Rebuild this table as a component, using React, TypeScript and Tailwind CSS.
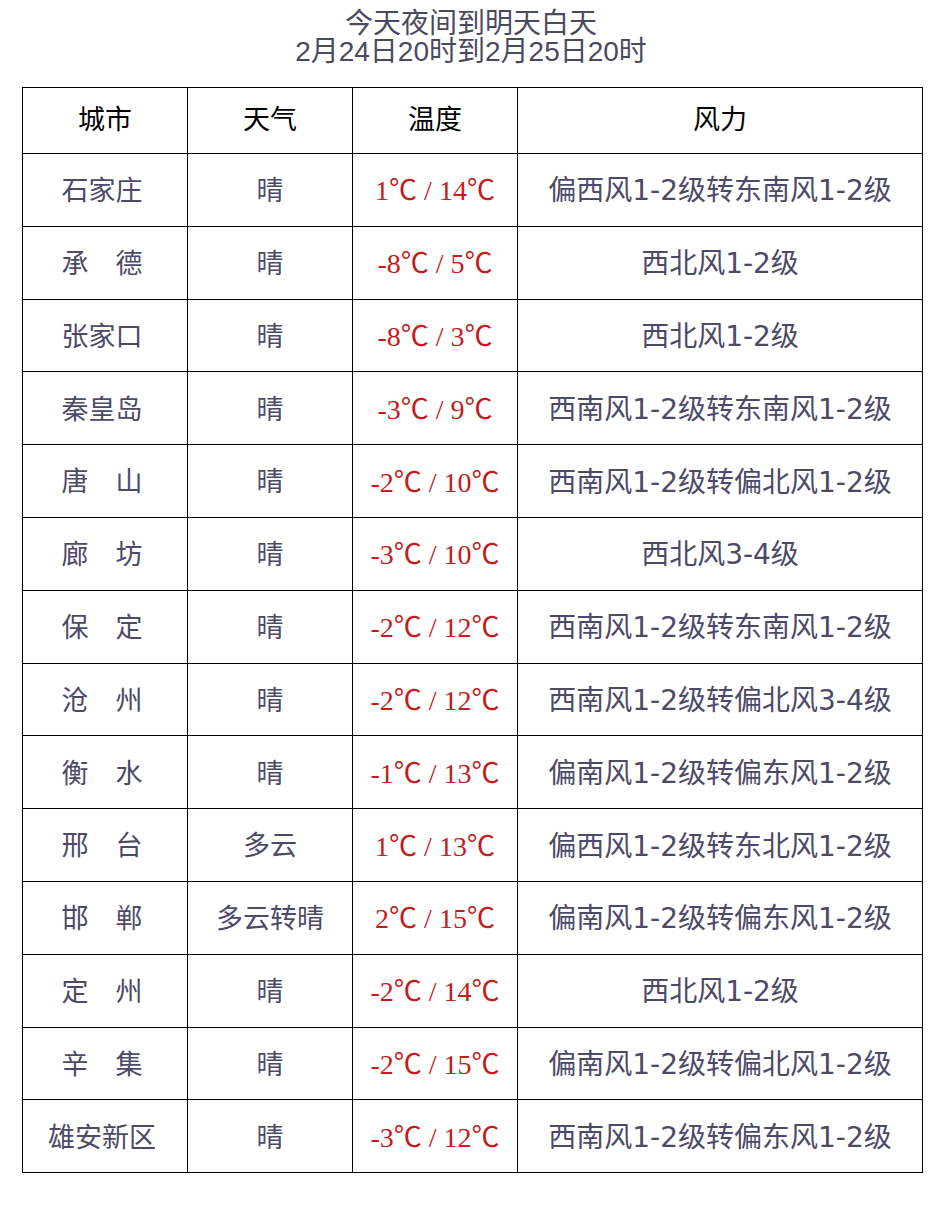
import React from "react";

const rows = [
  { city: "石家庄", weather: "晴", temp: "1℃ / 14℃", wind: "偏西风1-2级转东南风1-2级" },
  { city: "承　德", weather: "晴", temp: "-8℃ / 5℃", wind: "西北风1-2级" },
  { city: "张家口", weather: "晴", temp: "-8℃ / 3℃", wind: "西北风1-2级" },
  { city: "秦皇岛", weather: "晴", temp: "-3℃ / 9℃", wind: "西南风1-2级转东南风1-2级" },
  { city: "唐　山", weather: "晴", temp: "-2℃ / 10℃", wind: "西南风1-2级转偏北风1-2级" },
  { city: "廊　坊", weather: "晴", temp: "-3℃ / 10℃", wind: "西北风3-4级" },
  { city: "保　定", weather: "晴", temp: "-2℃ / 12℃", wind: "西南风1-2级转东南风1-2级" },
  { city: "沧　州", weather: "晴", temp: "-2℃ / 12℃", wind: "西南风1-2级转偏北风3-4级" },
  { city: "衡　水", weather: "晴", temp: "-1℃ / 13℃", wind: "偏南风1-2级转偏东风1-2级" },
  { city: "邢　台", weather: "多云", temp: "1℃ / 13℃", wind: "偏西风1-2级转东北风1-2级" },
  { city: "邯　郸", weather: "多云转晴", temp: "2℃ / 15℃", wind: "偏南风1-2级转偏东风1-2级" },
  { city: "定　州", weather: "晴", temp: "-2℃ / 14℃", wind: "西北风1-2级" },
  { city: "辛　集", weather: "晴", temp: "-2℃ / 15℃", wind: "偏南风1-2级转偏北风1-2级" },
  { city: "雄安新区", weather: "晴", temp: "-3℃ / 12℃", wind: "西南风1-2级转偏东风1-2级" },
];

const cjk = "font-['Liberation_Serif','Noto_Sans_CJK_SC',serif]";
const windFont = "font-['DejaVu_Sans','Noto_Sans_CJK_SC',sans-serif]";

export default function App() {
  return (
    <div className="w-[942px] h-[1218px] bg-white pt-[10px]">
      {/* title */}
      <div className="text-center text-[28px] leading-[28px] text-[#4a4a5e] font-['Liberation_Sans','Noto_Sans_CJK_SC',sans-serif]">
        <div>今天夜间到明天白天</div>
        <div>2月24日20时到2月25日20时</div>
      </div>

      <table className="ml-[22px] mt-[21px] w-[900px] border-collapse table-fixed">
        <colgroup>
          <col className="w-[165px]" />
          <col className="w-[165px]" />
          <col className="w-[165px]" />
          <col className="w-[405px]" />
        </colgroup>
        <thead>
          <tr className="h-[66px]">
            {["城市", "天气", "温度", "风力"].map((h) => (
              <th
                key={h}
                className={`border border-black text-center text-[27px] font-normal text-black ${cjk}`}
              >
                {h}
              </th>
            ))}
          </tr>
        </thead>
        <tbody>
          {rows.map((r) => (
            <tr key={r.city} className="h-[72.8px]">
              <td className={`border border-black pt-[3px] pr-[6px] text-center text-[27px] text-[#4d4a68] ${cjk}`}>
                {r.city}
              </td>
              <td className={`border border-black pt-[3px] text-center text-[27px] text-[#4d4a68] ${cjk}`}>
                {r.weather}
              </td>
              <td className={`border border-black pt-[3px] text-center text-[28px] text-[#c41b1b] whitespace-pre ${cjk}`}>
                {r.temp}
              </td>
              <td className={`border border-black pt-[3px] text-center text-[28px] text-[#4d4a68] ${windFont}`}>
                {r.wind}
              </td>
            </tr>
          ))}
        </tbody>
      </table>
    </div>
  );
}
